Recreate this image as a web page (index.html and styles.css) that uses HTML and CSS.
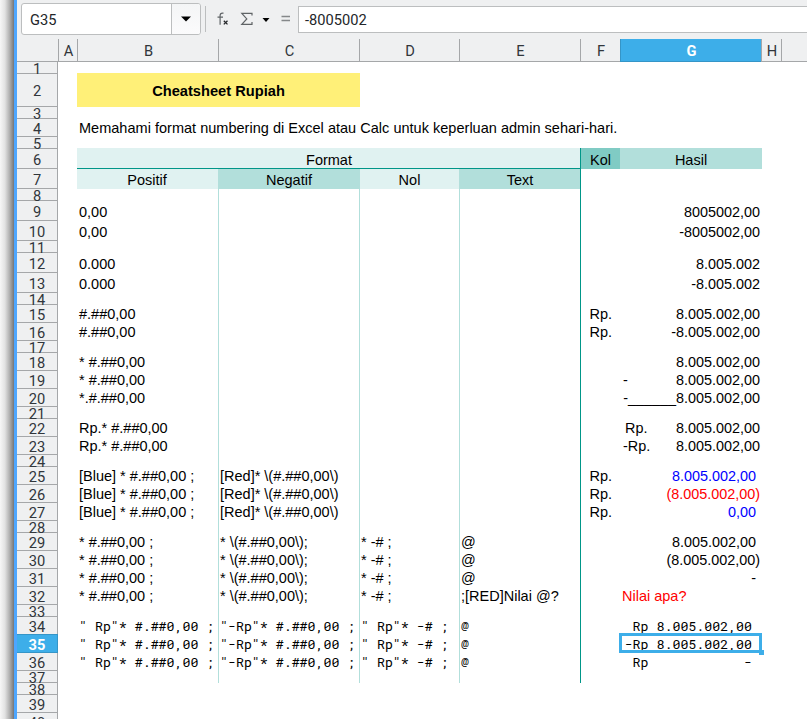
FILE: index.html
```
<!DOCTYPE html>
<html lang="id">
<head>
<meta charset="utf-8">
<title>Cheatsheet Rupiah</title>
<link rel="stylesheet" href="styles.css">
</head>
<body>
<div class="shadow"></div>
<main class="window">
  <header class="formula-bar">
    <div class="name-box"><span>G35</span><i><svg width="14" height="8" viewBox="0 0 14 8"><path d="M2 1.500h10L7 6.500z"/></svg></i></div>
    <div class="separator"></div>
    <svg class="tools" width="92" height="36" viewBox="0 0 92 36">
      <g fill="none" stroke="#5f6366" stroke-width="1.2">
        <path d="M17.500 13.200h-1c-1.600 0-2.400.9-2.400 2.400v9.200M11.500 17.200h5.500"/>
        <path d="M46 15.500v-2.200H35.800l5 5.600-5 5.400H46v-2.200"/>
      </g>
      <path d="M75.500 16.500h8.500M75.500 20.500h8.500" fill="none" stroke="#85888a" stroke-width="1.400"/>
      <path d="M17.800 20.700l3.700 3.700m0-3.700l-3.700 3.700" fill="none" stroke="#232629" stroke-width="1.300"/>
      <path d="M56.500 18h7l-3.500 4z"/>
    </svg>
    <div class="input-line">-8005002</div>
  </header>
  <section class="sheet">
    <div class="row columns"><b class="corner"></b><b>A</b><b>B</b><b>C</b><b>D</b><b>E</b><b>F</b><b class="active">G</b><b>H</b><b></b></div>
    <div class="row h12"><b>1</b></div>
    <div class="row h33"><b>2</b><p></p><p class="title">Cheatsheet Rupiah</p></div>
    <div class="row h12"><b>3</b></div>
    <div class="row h18"><b>4</b><p></p><p class="intro">Memahami format numbering di Excel atau Calc untuk keperluan admin sehari-hari.</p></div>
    <div class="row h12"><b>5</b></div>
    <div class="row h20 head"><b>6</b><p></p><p class="format">Format</p><p class="kol">Kol</p><p class="hasil">Hasil</p></div>
    <div class="row h20 head ruled"><b>7</b><p></p><p class="pale">Positif</p><p class="teal">Negatif</p><p class="pale">Nol</p><p class="teal">Text</p><p></p><p></p></div>
    <div class="row h12 ruled"><b>8</b><p></p><p></p><p></p><p></p><p></p><p></p><p></p></div>
    <div class="row h20 ruled"><b>9</b><p></p><p>0,00</p><p></p><p></p><p></p><p></p><p class="num">8005002,00</p></div>
    <div class="row h20 ruled"><b>10</b><p></p><p>0,00</p><p></p><p></p><p></p><p></p><p class="num">-8005002,00</p></div>
    <div class="row h12 ruled"><b>11</b><p></p><p></p><p></p><p></p><p></p><p></p><p></p></div>
    <div class="row h20 ruled"><b>12</b><p></p><p>0.000</p><p></p><p></p><p></p><p></p><p class="num">8.005.002</p></div>
    <div class="row h20 ruled"><b>13</b><p></p><p>0.000</p><p></p><p></p><p></p><p></p><p class="num">-8.005.002</p></div>
    <div class="row h12 ruled"><b>14</b><p></p><p></p><p></p><p></p><p></p><p></p><p></p></div>
    <div class="row h18 ruled"><b>15</b><p></p><p>#.##0,00</p><p></p><p></p><p></p><p class="rp">Rp.</p><p class="num">8.005.002,00</p></div>
    <div class="row h18 ruled"><b>16</b><p></p><p>#.##0,00</p><p></p><p></p><p></p><p class="rp">Rp.</p><p class="num">-8.005.002,00</p></div>
    <div class="row h12 ruled"><b>17</b><p></p><p></p><p></p><p></p><p></p><p></p><p></p></div>
    <div class="row h18 ruled"><b>18</b><p></p><p>* #.##0,00</p><p></p><p></p><p></p><p></p><p class="num">8.005.002,00</p></div>
    <div class="row h18 ruled"><b>19</b><p></p><p>* #.##0,00</p><p></p><p></p><p></p><p></p><p class="split"><span>-</span><span>8.005.002,00</span></p></div>
    <div class="row h18 ruled"><b>20</b><p></p><p>*.#.##0,00</p><p></p><p></p><p></p><p></p><p class="num">-______8.005.002,00</p></div>
    <div class="row h12 ruled"><b>21</b><p></p><p></p><p></p><p></p><p></p><p></p><p></p></div>
    <div class="row h18 ruled"><b>22</b><p></p><p>Rp.* #.##0,00</p><p></p><p></p><p></p><p></p><p class="split"><span class="inset">Rp.</span><span>8.005.002,00</span></p></div>
    <div class="row h18 ruled"><b>23</b><p></p><p>Rp.* #.##0,00</p><p></p><p></p><p></p><p></p><p class="split"><span>-Rp.</span><span>8.005.002,00</span></p></div>
    <div class="row h12 ruled"><b>24</b><p></p><p></p><p></p><p></p><p></p><p></p><p></p></div>
    <div class="row h18 ruled"><b>25</b><p></p><p>[Blue] * #.##0,00 ;</p><p>[Red]* \(#.##0,00\)</p><p></p><p></p><p class="rp">Rp.</p><p class="num pad blue">8.005.002,00</p></div>
    <div class="row h18 ruled"><b>26</b><p></p><p>[Blue] * #.##0,00 ;</p><p>[Red]* \(#.##0,00\)</p><p></p><p></p><p class="rp">Rp.</p><p class="num red">(8.005.002,00)</p></div>
    <div class="row h18 ruled"><b>27</b><p></p><p>[Blue] * #.##0,00 ;</p><p>[Red]* \(#.##0,00\)</p><p></p><p></p><p class="rp">Rp.</p><p class="num pad blue">0,00</p></div>
    <div class="row h12 ruled"><b>28</b><p></p><p></p><p></p><p></p><p></p><p></p><p></p></div>
    <div class="row h18 ruled"><b>29</b><p></p><p>* #.##0,00 ;</p><p>* \(#.##0,00\);</p><p>* -# ;</p><p>@</p><p></p><p class="num pad">8.005.002,00</p></div>
    <div class="row h18 ruled"><b>30</b><p></p><p>* #.##0,00 ;</p><p>* \(#.##0,00\);</p><p>* -# ;</p><p>@</p><p></p><p class="num">(8.005.002,00)</p></div>
    <div class="row h18 ruled"><b>31</b><p></p><p>* #.##0,00 ;</p><p>* \(#.##0,00\);</p><p>* -# ;</p><p>@</p><p></p><p class="num pad">-</p></div>
    <div class="row h18 ruled"><b>32</b><p></p><p>* #.##0,00 ;</p><p>* \(#.##0,00\);</p><p>* -# ;</p><p>;[RED]Nilai @?</p><p></p><p class="red">Nilai apa?</p></div>
    <div class="row h12 ruled"><b>33</b><p></p><p></p><p></p><p></p><p></p><p></p><p></p></div>
    <div class="row h18 ruled mono"><b>34</b><p></p><p>" Rp"* #.##0,00 ;</p><p>"-Rp"* #.##0,00 ;</p><p>" Rp"* -# ;</p><p>@</p><p></p><p class="num"> Rp 8.005.002,00 </p></div>
    <div class="row h18 ruled mono"><b class="active">35</b><p></p><p>" Rp"* #.##0,00 ;</p><p>"-Rp"* #.##0,00 ;</p><p>" Rp"* -# ;</p><p>@</p><p></p><p class="num selected">-Rp 8.005.002,00 </p></div>
    <div class="row h18 ruled mono"><b>36</b><p></p><p>" Rp"* #.##0,00 ;</p><p>"-Rp"* #.##0,00 ;</p><p>" Rp"* -# ;</p><p>@</p><p></p><p class="num"> Rp            - </p></div>
    <div class="row h12 ruled"><b>37</b><p></p><p></p><p></p><p></p><p></p><p></p><p></p></div>
    <div class="row h12"><b>38</b></div>
    <div class="row h18"><b>39</b></div>
    <div class="row h18"><b>40</b></div>
  </section>
</main>
</body>
</html>
```
FILE: styles.css
```
* { box-sizing: border-box; }
body {
  margin: 0;
  height: 719px;
  display: flex;
  overflow: hidden;
  background: #fff;
  font-family: "Liberation Sans", sans-serif;
  font-size: 14.5px;
  color: #000;
}
.shadow { width: 14px; background: linear-gradient(90deg, #f7f7f7 0, #e2e2e2 35%, #b0b0b0 68%, #737578 100%); }
.window { flex: 1; min-width: 0; border-left: 3px solid #4da6ff; }

.formula-bar {
  height: 39px;
  display: flex;
  padding-left: 4px;
  background: #eff0f1;
  font-family: Roboto, sans-serif;
  font-size: 14.67px;
  color: #232629;
}
.name-box {
  width: 180px;
  height: 32px;
  margin-top: 3px;
  display: flex;
  border: 1px solid #bcbebf;
  border-radius: 3px;
  background: #fff;
  overflow: hidden;
}
.name-box span { flex: 1; padding-left: 8px; line-height: 32px; }
.name-box i {
  width: 29px;
  display: flex;
  align-items: center;
  justify-content: center;
  border-left: 1px solid #bcbebf;
  background: linear-gradient(#f4f5f6, #fbfbfc);
}
.separator { width: 1px; height: 26px; margin: 6px 0 0 4px; background: #bcbebf; }
.tools { flex: none; }
.input-line {
  flex: 1;
  height: 27px;
  margin-top: 6px;
  padding-left: 6px;
  line-height: 26px;
  border: 1px solid #bcbebf;
  border-right: 0;
  background: #fff;
}

.row {
  display: grid;
  grid-template-columns: 41px 19px 141px 141px 100px 121px 40px 141px 20px 1fr;
  grid-template-rows: 100%;
}
.h12 { height: 12px; line-height: 12px; }
.h18 { height: 18px; line-height: 18px; }
.h20 { height: 20px; line-height: 22px; }
.h33 { height: 33px; line-height: 33px; }

.row b {
  display: flex;
  align-items: center;
  justify-content: center;
  padding-top: 2px;
  border: solid #a5a7a9;
  border-width: 0 1px 1px 0;
  background: #eff0f1;
  font-family: Roboto, sans-serif;
  font-size: 14.67px;
  font-weight: 400;
  line-height: 17px;
  color: #31363b;
}
.h12 b, .h18 b, .h20 b { padding-top: 3px; }
.row.columns { height: 23px; }
.columns b { padding: 2px 0 0 1px; border-width: 0 0 1px 1px; }
.columns .corner { border-left: 0; }
.row b.active { background: #3daee9; border-color: #3595c7; font-weight: 700; color: #fff; }
.mono b.active { box-shadow: 0 -1px #3595c7; }

.row p { margin: 0; padding-left: 2px; white-space: pre; min-width: 0; }
.row .num { text-align: right; padding: 0 1px 0 0; }
.num, .split { font-size: 14.4px; }
.row .pad { padding-right: 5px; }
.row .rp { padding: 0 8px 0 0; text-align: right; }
.row .split { display: flex; justify-content: space-between; padding: 0 1px 0 3px; }
.split .inset { padding-left: 2px; }
.blue { color: #00f; }
.red { color: #f00; }
.mono, .mono .num { font-family: "Roboto Mono", "DejaVu Sans Mono", monospace; font-size: 13.27px; }

.row .title {
  grid-column: span 2;
  margin: -1px -1px 0 0;
  padding-left: 0;
  line-height: 36px;
  text-align: center;
  font-weight: 700;
  font-size: 14.67px;
  background: #fff078;
}
.intro { grid-column: span 5; letter-spacing: 0.02px; }
.row.head p { text-align: center; padding: 0; }
.row.head .format { grid-column: 3 / span 4; margin-top: -1px; padding: 1px 0 0 1px; background: #e0f2f1; border-bottom: 1px solid #009688; }
.row.head .kol { margin-top: -1px; padding-top: 1px; background: #80cbc4; border-left: 1px solid #009688; }
.row.head .hasil { margin: -1px -1px 0 0; padding-top: 1px; background: #b2dfdb; }
.row.head.ruled p { padding-right: 1px; }
.pale { background: #e0f2f1; }
.teal { background: #b2dfdb; }
.ruled p:nth-child(n+4):nth-child(-n+6) { border-left: 1px solid #b2dfdb; padding-left: 1px; }
.ruled p:nth-child(7) { border-left: 1px solid #009688; }

.row .selected { position: relative; }
.selected::before {
  content: "";
  position: absolute;
  inset: -2px -1px 0 -1px;
  border: 3px solid #3daee9;
}
.selected::after {
  content: "";
  position: absolute;
  right: -3px;
  bottom: -2px;
  width: 5px;
  height: 5px;
  background: #3daee9;
}
```
